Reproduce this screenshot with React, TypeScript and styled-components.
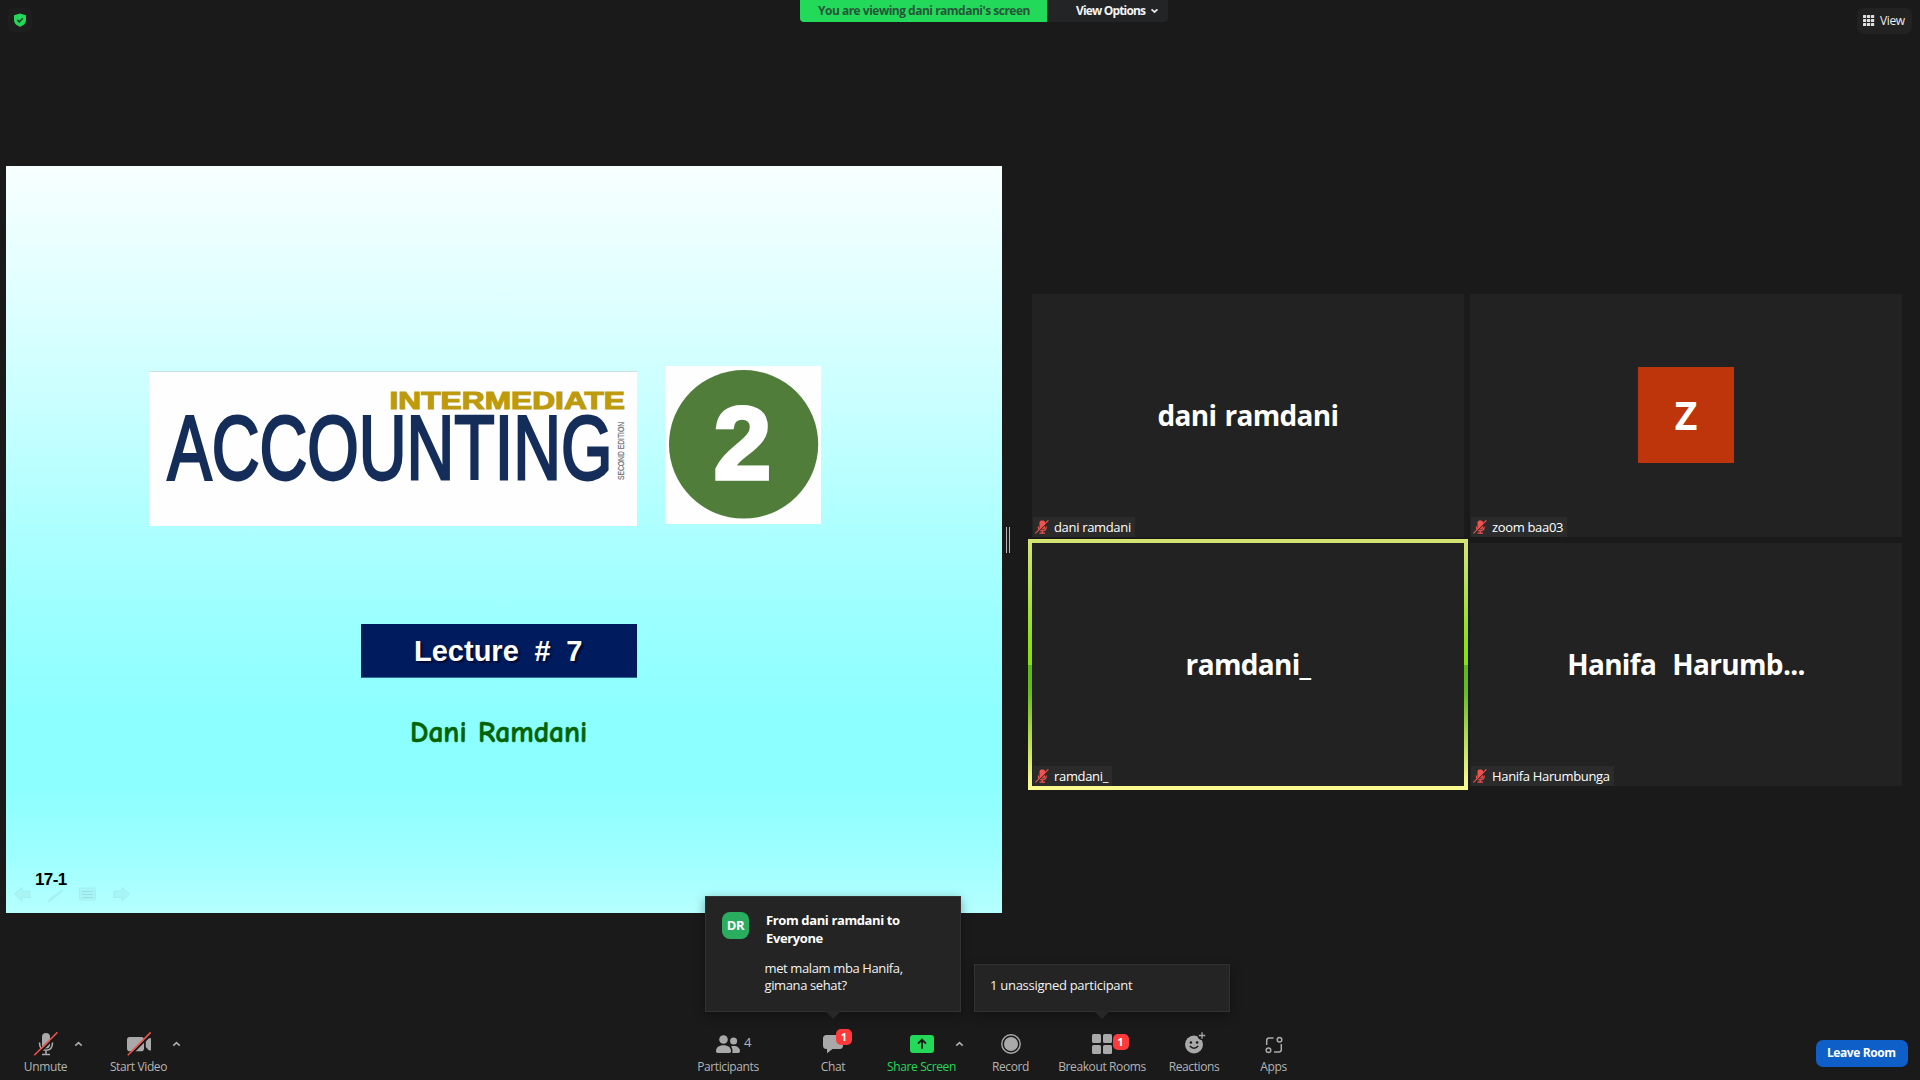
import React from "react";
import styled, { createGlobalStyle, css } from "styled-components";

const GlobalStyle = createGlobalStyle`
  *, *::before, *::after { box-sizing: border-box; }
  body { margin: 0; background: #1a1a1a; overflow: hidden; }
`;

const uiFont = `"Open Sans", "Noto Sans", sans-serif`;
const iconGrey = "#a9a9a9";

const Screen = styled.div`
  width: 1920px;
  height: 1080px;
  display: flex;
  flex-direction: column;
  background: #1a1a1a;
  color: #fff;
  font-family: ${uiFont};
  font-size: 12px;
  white-space: nowrap;
`;

/* ---------- top bar ---------- */

const TopBar = styled.header`
  height: 40px;
  display: grid;
  grid-template-columns: 800px 368px 1fr;
  align-items: start;
`;

const ShieldButton = styled.div`
  margin: 8px 0 0 8px;
  width: 24px;
  height: 24px;
  display: flex;
  align-items: center;
  justify-content: center;
  border-radius: 6px;
  background: #1e1e1e;
`;

const ShareBanner = styled.div`
  display: flex;
  height: 22px;
  border-radius: 0 0 4px 4px;
  overflow: hidden;
  font-weight: 700;
  line-height: 22px;
`;

const BannerStatus = styled.div`
  width: 247px;
  padding-left: 18px;
  background: #23d959;
  color: #27553a;
  letter-spacing: -0.5px;
`;

const BannerOptions = styled.div`
  flex: 1;
  display: flex;
  align-items: center;
  gap: 6px;
  padding-left: 29px;
  background: #222426;
  color: #f4f4f4;
  letter-spacing: -0.84px;

  svg {
    margin-left: -1px;
  }
`;

const ViewButton = styled.div`
  justify-self: end;
  margin: 8px 8px 0 0;
  width: 55px;
  height: 26px;
  display: flex;
  align-items: center;
  gap: 5px;
  padding: 0 0 2px 6px;
  border-radius: 7px;
  background: #222;
  color: #ececec;
  letter-spacing: -0.4px;
`;

/* ---------- stage ---------- */

const Stage = styled.main`
  height: 980px;
  display: flex;
  align-items: flex-start;
  padding: 126px 0 0 6px;
`;

const Slide = styled.section`
  width: 996px;
  height: 747px;
  display: flex;
  flex-direction: column;
  align-items: flex-start;
  padding-top: 200px;
  background: linear-gradient(
    to bottom,
    #f8ffff 0%,
    #e2ffff 16%,
    #c9ffff 32%,
    #b0ffff 47%,
    #9dffff 60%,
    #8cffff 74%,
    #8cffff 83%,
    #a0ffff 93%,
    #b6ffff 100%
  );
`;

const TitleRow = styled.div`
  display: flex;
  gap: 28px;
  margin-left: 143px;
  height: 158px;
`;

const TitlePlate = styled.svg`
  margin-top: 5px;
  width: 488px;
  height: 155px;
  background: #fefefe;
  border-top: 1px solid #c9dfe2;
`;

const NumberPlate = styled.svg`
  width: 156px;
  height: 158px;
  background: #fefefe;
`;

const LectureBox = styled.div`
  margin: 100px 0 0 355px;
  width: 276px;
  height: 54px;
  padding-left: 53px;
  background: #001c5f;
  border-bottom: 1px solid #2c6b94;
  font: 700 29px/55px "Liberation Sans", Arial, sans-serif;
  word-spacing: -0.2px;
  white-space: pre;
  text-shadow: 2px 2px 2px #000a30;
`;

const Presenter = styled.div`
  margin: 34px 0 0 404px;
  font: 700 29.5px/40px "Comic Neue", "Comic Sans MS", cursive;
  word-spacing: 1px;
  color: #056305;
  -webkit-text-stroke: 0.6px #056305;
`;

const SlideNumber = styled.div`
  margin: 118px 0 0 29px;
  font: 700 17px/20px "Liberation Sans", Arial, sans-serif;
  letter-spacing: -0.6px;
  color: #000;
`;

const SlideNav = styled.div`
  display: flex;
  gap: 16.5px;
  margin: -4px 0 0 8px;
`;

const Divider = styled.div`
  width: 4px;
  height: 26px;
  margin: 361px 22px 0 4px;
  border: solid #b4b4b4;
  border-width: 0 1px;
`;

/* ---------- gallery ---------- */

const Gallery = styled.section`
  display: grid;
  grid-template-columns: repeat(2, 432px);
  grid-auto-rows: 243px;
  gap: 6px;
  margin-top: 128px;
`;

const Tile = styled.article<{ $active?: boolean }>`
  position: relative;
  display: flex;
  align-items: center;
  justify-content: center;
  padding-bottom: 2px;
  background: #222;
  ${(p) =>
    p.$active &&
    css`
      &::before {
        content: "";
        position: absolute;
        inset: -4px;
        border: 4px solid;
        border-image: linear-gradient(
            #d5e374 0%,
            #d0e46c 4%,
            #8ee017 41%,
            #88e00c 50%,
            #5fb815 50.2%,
            #67bd1c 61%,
            #b2da46 78%,
            #f6f785 96%,
            #fafa90 100%
          ) 4;
      }
    `}
`;

const BigName = styled.div`
  font-size: 28px;
  font-weight: 700;
  line-height: 36px;
  letter-spacing: -0.68px;
  word-spacing: 1.5px;
  white-space: pre;
`;

const TileAvatar = styled.div`
  width: 96px;
  height: 96px;
  display: flex;
  align-items: center;
  justify-content: center;
  background: #be350b;
  font-size: 39px;
  font-weight: 700;
  line-height: 94px;
`;

const NameTag = styled.div`
  position: absolute;
  left: 1px;
  bottom: 0;
  height: 20px;
  display: flex;
  align-items: center;
  gap: 5px;
  padding: 0 4px 0 2px;
  background: #2b2b2b;
  font-size: 13px;
  line-height: 20px;
  letter-spacing: -0.33px;
`;

/* ---------- toolbar ---------- */

const Toolbar = styled.footer`
  height: 60px;
  display: grid;
  grid-template-columns: 690px 1126px 1fr;
  align-items: start;
  padding-top: 12px;
`;

const ToolGroup = styled.div<{ $start?: number }>`
  display: flex;
  padding-left: ${(p) => p.$start ?? 0}px;
`;

const Tool = styled.div<{ $width: number; $gap?: number; $accent?: boolean }>`
  position: relative;
  width: ${(p) => p.$width}px;
  margin-left: ${(p) => p.$gap ?? 0}px;
  display: flex;
  flex-direction: column;
  align-items: center;
  gap: 2px;
  color: ${(p) => (p.$accent ? "#23d959" : "#b4b4b4")};
`;

const ToolIcon = styled.div`
  position: relative;
  height: 24px;
  display: flex;
  align-items: center;
  justify-content: center;
`;

const ToolLabel = styled.div`
  line-height: 17px;
  letter-spacing: -0.38px;
`;

const CaretButton = styled.div<{ $width: number }>`
  width: ${(p) => p.$width}px;
  height: 24px;
  display: flex;
  align-items: center;
  justify-content: center;
`;

const Badge = styled.span<{ $x: number; $y: number }>`
  position: absolute;
  left: ${(p) => p.$x}px;
  top: ${(p) => p.$y}px;
  width: 16px;
  height: 16px;
  border-radius: 5px;
  background: #ff3a3a;
  color: #fff;
  font-size: 11px;
  font-weight: 700;
  line-height: 15px;
  text-align: center;
`;

const Count = styled.span`
  position: absolute;
  left: 28px;
  top: 2px;
  font-size: 13px;
  line-height: 16px;
`;

const LeaveButton = styled.div`
  margin-top: 8px;
  width: 92px;
  height: 27px;
  padding-left: 11px;
  border-radius: 7px;
  background: #0e5fc8;
  font-weight: 700;
  line-height: 25px;
  letter-spacing: -0.42px;
`;

const Popup = styled.div`
  position: absolute;
  left: 50%;
  bottom: calc(100% + 20px);
  width: 256px;
  margin-left: -128px;
  background: #242424;
  border: 1px solid #323232;
  box-shadow: 0 3px 10px rgba(0, 0, 0, 0.35);
  color: #f2f2f2;
  font-size: 13px;
  letter-spacing: -0.38px;

  &::after {
    content: "";
    position: absolute;
    left: 50%;
    top: 100%;
    margin-left: -8px;
    border: 8px solid transparent;
    border-top-color: #272727;
    border-bottom: 0;
  }
`;

const ChatPopup = styled(Popup)`
  height: 116px;
  display: flex;
  gap: 17px;
  padding: 14px 16px;
`;

const NoticePopup = styled(Popup)`
  height: 48px;
  padding-left: 15px;
  line-height: 41px;
  letter-spacing: -0.28px;
`;

const ChatAvatar = styled.div`
  width: 27px;
  height: 27px;
  margin-top: 1px;
  border-radius: 8px;
  background: #29ad5f;
  color: #fff;
  font-size: 13px;
  font-weight: 700;
  line-height: 27px;
  text-align: center;
`;

const ChatTitle = styled.div`
  font-weight: 700;
  line-height: 18px;
  color: #fff;
  white-space: pre;
`;

const ChatText = styled.div`
  margin: 13px 0 0 -1.5px;
  line-height: 17.4px;
  white-space: pre;
`;

/* ---------- icons ---------- */

const Caret = ({ down, color = iconGrey }: { down?: boolean; color?: string }) => (
  <svg width="9" height="6" viewBox="0 0 9 6" fill="none">
    <path d={down ? "M1.5 1.3 4.5 4 7.5 1.3" : "M1.3 4.6 4.5 1.6 7.7 4.6"} stroke={color} strokeWidth="1.7" />
  </svg>
);

const ShieldIcon = () => (
  <svg width="14" height="14" viewBox="0 0 14 14">
    <path d="M7 .4 13 2.3V7c0 3.3-2.6 5.5-6 6.7C3.6 12.5 1 10.3 1 7V2.3Z" fill="#23d959" />
    <path d="m4.3 6.9 2 2 3.500-3.700" fill="none" stroke="#1a3a24" strokeWidth="1.5" />
  </svg>
);

const GridIcon = () => (
  <svg width="12" height="11" viewBox="0 0 12 11" fill="#e0e0e0">
    {[0, 4, 8].map((x) =>
      [0, 4, 8].map((y) => <rect key={`${x}-${y}`} x={x} y={y} width="3.2" height="3" rx=".5" />)
    )}
  </svg>
);

const MutedMic = () => (
  <svg width="26" height="24" viewBox="0 0 26 24" fill="none">
    <rect x="9" y="1" width="8" height="15.5" rx="4" fill={iconGrey} />
    <path d="M6.5 10.5c0 5 2.5 7.8 6.5 7.8s6.500-2.800 6.500-7.800M13 18.500v3.500M9 22.500h8" stroke={iconGrey} strokeWidth="1.6" />
    <path d="M2.700 24.500 26 1.200" stroke="#1a1a1a" strokeWidth="1.800" />
    <path d="M1.300 23.300 24.500.3" stroke="#f0514c" strokeWidth="1.600" />
  </svg>
);

const VideoOff = () => (
  <svg width="26" height="24" viewBox="0 0 26 24" fill="none">
    <rect x="1" y="5" width="17" height="14.200" rx="2.800" fill={iconGrey} />
    <path d="M19.800 9.500 22.500 6.500q2.500-1 2.500 0v11.500q0 1-2.500 0l-2.700-3Z" fill={iconGrey} />
    <path d="M3.200 24.300 26 1.400" stroke="#1a1a1a" strokeWidth="2" />
    <path d="M1.800 23.300 24.700.4" stroke="#f0514c" strokeWidth="1.600" />
  </svg>
);

const PeopleIcon = () => (
  <svg width="24" height="24" viewBox="0 0 24 24" fill={iconGrey}>
    <circle cx="7.500" cy="7.500" r="4.300" />
    <circle cx="17.600" cy="9" r="3.500" />
    <path d="M0 19.300C0 15.600 2.800 13.300 7.500 13.300s7.500 2.300 7.500 6q0 1.700-1.700 1.700H1.700Q0 21 0 19.300Z" />
    <path d="M15 14.400c4.700-1.400 9 .6 9 4.800q0 1.800-1.800 1.800h-6c.6-2.800.5-4.800-1.200-6.600Z" />
  </svg>
);

const ChatIcon = () => (
  <svg width="20" height="24" viewBox="0 0 20 24" fill={iconGrey}>
    <path d="M3.500 3h13Q20 3 20 6.500v7q0 3.500-3.500 3.500H9.500L4 21.300V17H3.500Q0 17 0 13.500v-7Q0 3 3.500 3Z" />
  </svg>
);

const ShareIcon = () => (
  <svg width="24" height="24" viewBox="0 0 24 24" fill="none">
    <rect y="3" width="24" height="18" rx="3" fill="#23d959" />
    <path d="M12 16.800V8M8 11.700l4-4 4 4" stroke="#1a1a1a" strokeWidth="1.900" />
  </svg>
);

const RecordIcon = () => (
  <svg width="20" height="24" viewBox="0 0 20 24">
    <circle cx="10" cy="12" r="9.200" fill="none" stroke={iconGrey} strokeWidth="1.400" />
    <circle cx="10" cy="12" r="7" fill={iconGrey} />
  </svg>
);

const RoomsIcon = () => (
  <svg width="20" height="24" viewBox="0 0 20 24" fill={iconGrey}>
    {[0, 11].map((x) => [2, 13].map((y) => <rect key={`${x}-${y}`} x={x} y={y} width="9" height="9" rx="1.500" />))}
  </svg>
);

const ReactionIcon = () => (
  <svg width="24" height="24" viewBox="0 0 24 24" fill="none">
    <circle cx="12" cy="12.500" r="9" fill={iconGrey} />
    <circle cx="20" cy="3.500" r="4.600" fill="#1a1a1a" />
    <path d="M20 .3v6.400M16.800 3.500h6.400" stroke={iconGrey} strokeWidth="1.300" />
    <circle cx="8.900" cy="10.500" r="1.300" fill="#1a1a1a" />
    <circle cx="15.100" cy="10.500" r="1.300" fill="#1a1a1a" />
    <path d="M7.800 14q4.200 4.300 8.400 0" stroke="#1a1a1a" strokeWidth="1.500" />
  </svg>
);

const AppsIcon = () => (
  <svg width="18" height="24" viewBox="0 0 18 24" fill="none" stroke={iconGrey} strokeWidth="1.500">
    <path d="M1.700 13V8.500Q1.700 6 4.200 6H8.500M16.300 12v5.500q0 2.500-2.500 2.500H9" />
    <circle cx="14.500" cy="7.800" r="2.300" />
    <circle cx="3.500" cy="18.200" r="2.300" />
  </svg>
);

const TagMic = () => (
  <svg width="14" height="14" viewBox="0 0 14 14" fill="none">
    <rect x="4.500" y=".5" width="5.500" height="9" rx="2" fill="#f0524f" />
    <path d="M3.300 6.500c0 3 1.500 4.300 4 4.300s4-1.300 4-4.300M7.300 10.800V13M4.500 13.200h5.600" stroke="#f0524f" strokeWidth="1.200" />
    <path d="M1 14 14 1" stroke="#2b2b2b" strokeWidth="1.200" />
    <path d="M.4 13.400 13.400.4" stroke="#f0524f" strokeWidth="1.200" />
  </svg>
);

const faint = { fill: "#a6f0f0", stroke: "#96dfe2", strokeWidth: 0.8, opacity: 0.6 };

const BackArrow = () => (
  <svg width="17" height="16" viewBox="0 0 17 16">
    <path d="M.5 8 8 1.500V5h8v6.500H8V15Z" {...faint} />
  </svg>
);
const PenMark = () => (
  <svg width="15" height="16" viewBox="0 0 15 16">
    <path d="m.5 15.500 2-3L14 4l.5 1L3.500 14Z" {...faint} />
  </svg>
);
const MenuMark = () => (
  <svg width="17" height="16" viewBox="0 0 17 16">
    <rect x=".5" y="2" width="16" height="12" rx="1.500" {...faint} />
    <path d="M3 5.500h11M3 8.500h11M3 11.500h11" stroke="#8ccfd3" opacity=".6" />
  </svg>
);
const NextArrow = () => (
  <svg width="17" height="16" viewBox="0 0 17 16">
    <path d="M16.500 8 9 1.500V5H1v6.500h8V15Z" {...faint} />
  </svg>
);

/* ---------- content ---------- */

const people: { name: string; title: string; initial?: string; active?: boolean }[] = [
  { name: "dani ramdani", title: "dani ramdani" },
  { name: "zoom baa03", title: "", initial: "Z" },
  { name: "ramdani_", title: "ramdani_", active: true },
  { name: "Hanifa Harumbunga", title: "Hanifa  Harumb..." },
];

const SlideTitle = () => (
  <TitlePlate viewBox="0 0 488 154" fontFamily="'Liberation Sans', Arial, sans-serif">
    <text x="240.500" y="37" fontSize="24" fontWeight="700" fill="#bd9b0c" stroke="#bd9b0c" strokeWidth="1.100" textLength="235.500" lengthAdjust="spacingAndGlyphs">
      INTERMEDIATE
    </text>
    <text x="18.500" y="106.500" fontSize="91" fill="#142d59" stroke="#142d59" strokeWidth="2.800" textLength="445" lengthAdjust="spacingAndGlyphs">
      ACCOUNTING
    </text>
    <text transform="translate(475 108) rotate(-90)" fontSize="9.500" fill="#6f6f76" stroke="#6f6f76" strokeWidth=".2" textLength="58" lengthAdjust="spacingAndGlyphs">
      SECOND EDITION
    </text>
  </TitlePlate>
);

const SlideBadge = () => (
  <NumberPlate viewBox="0 0 156 158">
    <ellipse cx="78.600" cy="78.300" rx="74.600" ry="74.300" fill="#517d3a" />
    <text x="77.500" y="112.500" fontFamily="'Liberation Sans', Arial, sans-serif" fontSize="104" fontWeight="700" fill="#fff" stroke="#fff" strokeWidth="3.500" textAnchor="middle">
      2
    </text>
  </NumberPlate>
);

export default function App() {
  return (
    <Screen>
      <GlobalStyle />
      <TopBar>
        <ShieldButton>
          <ShieldIcon />
        </ShieldButton>
        <ShareBanner>
          <BannerStatus>You are viewing dani ramdani's screen</BannerStatus>
          <BannerOptions>
            View Options
            <Caret down color="#e6e6e6" />
          </BannerOptions>
        </ShareBanner>
        <ViewButton>
          <GridIcon />
          View
        </ViewButton>
      </TopBar>

      <Stage>
        <Slide>
          <TitleRow>
            <SlideTitle />
            <SlideBadge />
          </TitleRow>
          <LectureBox>{"Lecture  #  7"}</LectureBox>
          <Presenter>Dani Ramdani</Presenter>
          <SlideNumber>17-1</SlideNumber>
          <SlideNav>
            <BackArrow />
            <PenMark />
            <MenuMark />
            <NextArrow />
          </SlideNav>
        </Slide>
        <Divider />
        <Gallery>
          {people.map((p) => (
            <Tile key={p.name} $active={p.active}>
              {p.initial ? <TileAvatar>{p.initial}</TileAvatar> : <BigName>{p.title}</BigName>}
              <NameTag>
                <TagMic />
                {p.name}
              </NameTag>
            </Tile>
          ))}
        </Gallery>
      </Stage>

      <Toolbar>
        <ToolGroup $start={23}>
          <Tool $width={45}>
            <ToolIcon><MutedMic /></ToolIcon>
            <ToolLabel>Unmute</ToolLabel>
          </Tool>
          <CaretButton $width={20}><Caret /></CaretButton>
          <Tool $width={58} $gap={21.5}>
            <ToolIcon><VideoOff /></ToolIcon>
            <ToolLabel>Start Video</ToolLabel>
          </Tool>
          <CaretButton $width={17}><Caret /></CaretButton>
        </ToolGroup>

        <ToolGroup>
          <Tool $width={76}>
            <ToolIcon>
              <PeopleIcon />
              <Count>4</Count>
            </ToolIcon>
            <ToolLabel>Participants</ToolLabel>
          </Tool>
          <Tool $width={58} $gap={38}>
            <ToolIcon>
              <ChatIcon />
              <Badge $x={13} $y={-3}>1</Badge>
            </ToolIcon>
            <ToolLabel>Chat</ToolLabel>
            <ChatPopup>
              <ChatAvatar>DR</ChatAvatar>
              <div>
                <ChatTitle>{"From dani ramdani to\nEveryone"}</ChatTitle>
                <ChatText>{"met malam mba Hanifa,\ngimana sehat?"}</ChatText>
              </div>
            </ChatPopup>
          </Tool>
          <Tool $width={66} $gap={26.5} $accent>
            <ToolIcon><ShareIcon /></ToolIcon>
            <ToolLabel>Share Screen</ToolLabel>
          </Tool>
          <CaretButton $width={9}><Caret /></CaretButton>
          <Tool $width={40} $gap={27}>
            <ToolIcon><RecordIcon /></ToolIcon>
            <ToolLabel>Record</ToolLabel>
          </Tool>
          <Tool $width={88} $gap={27.5}>
            <ToolIcon>
              <RoomsIcon />
              <Badge $x={20.5} $y={2}>1</Badge>
            </ToolIcon>
            <ToolLabel>Breakout Rooms</ToolLabel>
            <NoticePopup>1 unassigned participant</NoticePopup>
          </Tool>
          <Tool $width={52} $gap={22}>
            <ToolIcon><ReactionIcon /></ToolIcon>
            <ToolLabel>Reactions</ToolLabel>
          </Tool>
          <Tool $width={30} $gap={38.5}>
            <ToolIcon><AppsIcon /></ToolIcon>
            <ToolLabel>Apps</ToolLabel>
          </Tool>
        </ToolGroup>

        <LeaveButton>Leave Room</LeaveButton>
      </Toolbar>
    </Screen>
  );
}
